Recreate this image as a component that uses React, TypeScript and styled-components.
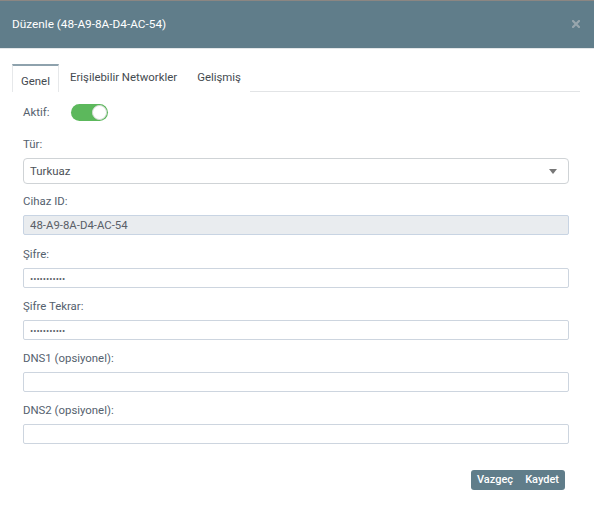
import React from "react";
import styled, { createGlobalStyle } from "styled-components";

const FONT = `Roboto, "Liberation Sans", sans-serif`;

const Global = createGlobalStyle`
  html, body { margin: 0; padding: 0; background: #fff; }
  body { font-family: ${FONT}; font-size: 11.4px; }
  * { box-sizing: border-box; }
`;

const Dialog = styled.div`
  width: 594px;
  height: 521px;
  background: #fff;
  display: flex;
  flex-direction: column;
`;

const Header = styled.div`
  height: 49px;
  background: #607d8a;
  border-top: 1px solid #8b8682;
  border-bottom: 1px solid #e3e6e8;
  display: flex;
  align-items: center;
  justify-content: space-between;
  padding: 0 14px 0 12px;
`;

const Title = styled.div`
  color: #fff;
  font-size: 11.8px;
  line-height: 14px;
  margin-top: -1px;
`;

const Close = styled.svg`
  width: 8px;
  height: 8px;
  margin-top: -2px;
`;

const Body = styled.div`
  padding: 15px 14px 0 12px;
  display: flex;
  flex-direction: column;
`;

const TabBar = styled.div`
  display: flex;
  height: 28px;
  border-bottom: 1px solid #e2e4e6;
`;

const Tab = styled.div<{ $active?: boolean }>`
  padding: ${(p) => (p.$active ? "8px 8px 0" : "4px 8px 0 10px")};
  border-top: 2px solid ${(p) => (p.$active ? "#8ea2ad" : "transparent")};
  border-left: 1px solid ${(p) => (p.$active ? "#e6e8ea" : "transparent")};
  border-right: 1px solid ${(p) => (p.$active ? "#e6e8ea" : "transparent")};
  background: #fff;
  margin-bottom: -1px;
  color: #444a50;
  font-size: 11.4px;
  line-height: 14px;
`;

const Form = styled.div`
  padding: 12px 11px 0 11px;
  display: flex;
  flex-direction: column;
`;

const ToggleRow = styled.div`
  display: flex;
  align-items: center;
  height: 17px;
  margin-bottom: 16px;
`;

const InlineLabel = styled.span`
  width: 48px;
  color: #55616e;
  font-size: 11.4px;
  line-height: 14px;
  margin-top: -2px;
`;

const Switch = styled.div`
  width: 37px;
  height: 17px;
  border-radius: 9px;
  background: #5cb85c;
  display: flex;
  align-items: center;
  justify-content: flex-end;
  padding-right: 1px;
`;

const Knob = styled.div`
  width: 15px;
  height: 15px;
  border-radius: 50%;
  background: #fff;
  border: 1px solid #d8dcd8;
`;

const Field = styled.div<{ $gap: number }>`
  display: flex;
  flex-direction: column;
  margin-bottom: ${(p) => p.$gap}px;
`;

const Label = styled.label`
  color: #55616e;
  font-size: 11.4px;
  line-height: 14px;
  margin-bottom: 7px;
`;

const SelectBox = styled.div`
  height: 26px;
  border: 1px solid #cfd3d6;
  border-radius: 4px;
  display: flex;
  align-items: center;
  justify-content: space-between;
  padding: 0 11px 0 6px;
  color: #4d5258;
  font-size: 11.4px;
`;

const Caret = styled.span`
  width: 0;
  height: 0;
  border-left: 4px solid transparent;
  border-right: 4px solid transparent;
  border-top: 5px solid #777;
`;

const Input = styled.input<{ $disabledLook?: boolean; $small?: boolean }>`
  height: 20px;
  width: 100%;
  border: 1px solid ${(p) => (p.$disabledLook ? "#c8d4e3" : "#cdd5df")};
  border-radius: 2px;
  background: ${(p) => (p.$disabledLook ? "#e9ecef" : "#fff")};
  padding: 0 6px;
  font-family: ${FONT};
  font-size: ${(p) => (p.$small ? "9.5px" : "11.4px")};
  color: #5a6068;
  outline: none;
`;

const Footer = styled.div`
  display: flex;
  justify-content: flex-end;
  padding: 26px 15px 0 0;
`;

const ButtonGroup = styled.div`
  display: flex;
  background: #607d8a;
  border-radius: 3px;
  height: 20px;
`;

const Button = styled.button`
  border: none;
  background: transparent;
  color: #fff;
  font-family: ${FONT};
  font-size: 11px;
  font-weight: 500;
  padding: 0 6px;
  height: 20px;
  line-height: 20px;
  cursor: pointer;
`;

const fields: { label: string; kind: "disabled" | "password" | "text"; value?: string; gap: number }[] = [
  { label: "Cihaz ID:", kind: "disabled", value: "48-A9-8A-D4-AC-54", gap: 12 },
  { label: "Şifre:", kind: "password", value: "12345678901", gap: 11 },
  { label: "Şifre Tekrar:", kind: "password", value: "12345678901", gap: 11 },
  { label: "DNS1 (opsiyonel):", kind: "text", gap: 11 },
  { label: "DNS2 (opsiyonel):", kind: "text", gap: 0 },
];

export default function App() {
  return (
    <>
      <Global />
      <Dialog>
        <Header>
          <Title>Düzenle (48-A9-8A-D4-AC-54)</Title>
          <Close viewBox="0 0 8 8">
            <path d="M1 1 L7 7 M7 1 L1 7" stroke="#98a6ad" strokeWidth="2.2" strokeLinecap="square" />
          </Close>
        </Header>
        <Body>
          <TabBar>
            <Tab $active>Genel</Tab>
            <Tab>Erişilebilir Networkler</Tab>
            <Tab>Gelişmiş</Tab>
          </TabBar>
          <Form>
            <ToggleRow>
              <InlineLabel>Aktif:</InlineLabel>
              <Switch>
                <Knob />
              </Switch>
            </ToggleRow>
            <Field $gap={10}>
              <Label>Tür:</Label>
              <SelectBox>
                <span>Turkuaz</span>
                <Caret />
              </SelectBox>
            </Field>
            {fields.map((f) => (
              <Field key={f.label} $gap={f.gap}>
                <Label>{f.label}</Label>
                {f.kind === "disabled" && (
                  <Input $disabledLook readOnly value={f.value} />
                )}
                {f.kind === "password" && (
                  <Input $small type="password" readOnly value={f.value} />
                )}
                {f.kind === "text" && <Input readOnly value="" />}
              </Field>
            ))}
          </Form>
          <Footer>
            <ButtonGroup>
              <Button>Vazgeç</Button>
              <Button>Kaydet</Button>
            </ButtonGroup>
          </Footer>
        </Body>
      </Dialog>
    </>
  );
}
